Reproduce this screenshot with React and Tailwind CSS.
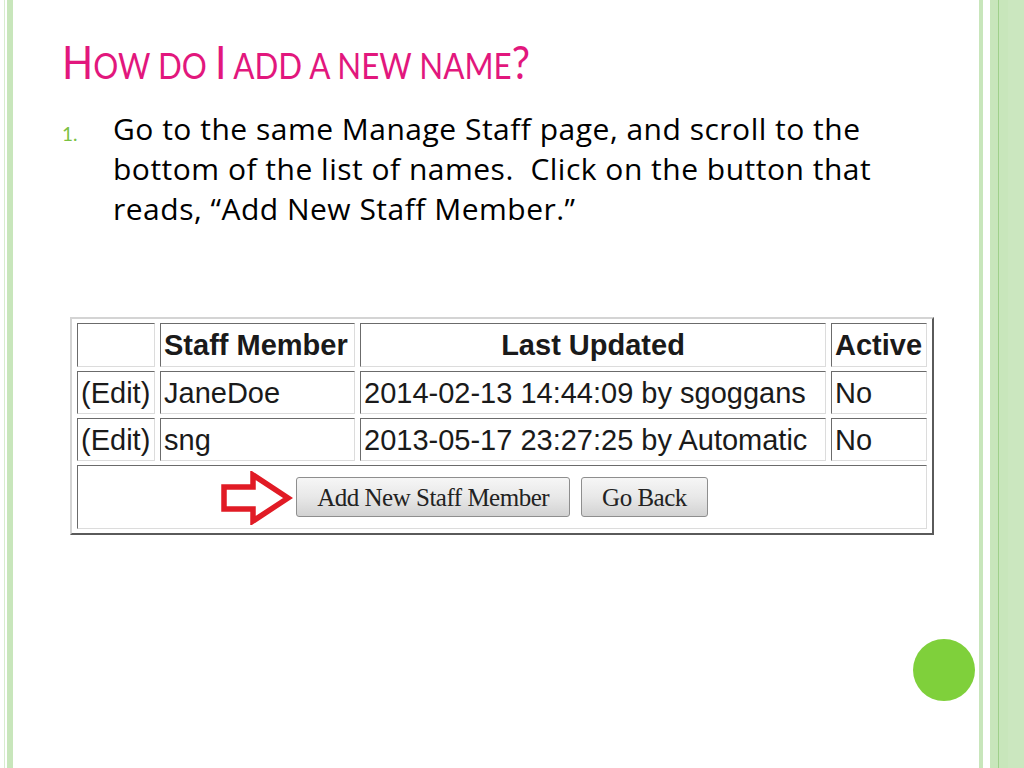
import React from 'react';

const rows = [
  { name: 'JaneDoe', updated: '2014-02-13 14:44:09 by sgoggans', active: 'No' },
  { name: 'sng', updated: '2013-05-17 23:27:25 by Automatic', active: 'No' },
];

const cell = 'border border-t-[#6b6b6b] border-l-[#6b6b6b] border-r-[#dcdcdc] border-b-[#dcdcdc] px-[3px] align-middle';

const Arrow = () => (
  <svg width="72" height="54" viewBox="0 0 72 54" className="absolute left-[-75px] top-[-6px]">
    <path
      d="M3 16 L32 16 L32 4 L67 27 L32 50 L32 38 L3 38 Z"
      fill="#ffffff"
      stroke="#e11b25"
      strokeWidth="5.5"
      strokeLinejoin="miter"
    />
  </svg>
);

const SlideButton = ({ children }) => (
  <button className="h-[40px] px-[20px] rounded-[3px] border border-[#8e8e8e] bg-gradient-to-b from-[#f6f6f6] via-[#e8e8e8] to-[#d2d2d2] text-[25px] text-[#222] font-['Liberation_Serif',serif] leading-none tracking-[-0.5px]">
    {children}
  </button>
);

export default function App() {
  return (
    <div className="flex w-[1024px] h-[768px] bg-white overflow-hidden">
      {/* left frame */}
      <div className="w-[4px]" />
      <div className="w-[1px] bg-[#d7ecce]" />
      <div className="w-[2px]" />
      <div className="w-[6px] bg-[#c8e6bb]" />

      <div className="flex-1 flex flex-col">
        <h1 className="ml-[49px] pt-[33px] origin-left scale-x-[0.87] whitespace-nowrap text-[#e2177d] text-[36px] leading-[56px] font-['Lato',sans-serif] uppercase">
          <span className="text-[47px]">H</span>ow do <span className="text-[47px]">I</span> add a new name<span className="text-[47px]">?</span>
        </h1>

        <div className="flex pl-[49px] pt-[16px]">
          <span className="w-[51px] pt-[15px] text-[19px] leading-[20px] text-[#7ac143] font-['Lato',sans-serif]">1.</span>
          <p className="w-[800px] text-[30px] leading-[40px] tracking-[0.5px] text-black font-['Open_Sans',sans-serif]">
            Go to the same Manage Staff page, and scroll to the bottom of the list of names.&nbsp; Click on the button that reads, “Add New Staff Member.”
          </p>
        </div>

        <div className="pl-[57px] pt-[88px]">
          <table className="border-separate border-spacing-x-[5px] border-spacing-y-[4px] border-2 border-t-[#d4d4d4] border-l-[#d4d4d4] border-r-[#5a5a5a] border-b-[#5a5a5a] bg-white text-[29px] leading-[34px] text-[#1a1a1a] font-['Liberation_Sans',Arial,sans-serif]">
            <thead>
              <tr className="h-[44px] font-bold">
                <th className={`${cell} w-[78px]`}></th>
                <th className={`${cell} w-[195px] text-left`}>Staff Member</th>
                <th className={`${cell} w-[466px] text-center`}>Last Updated</th>
                <th className={`${cell} w-[96px] text-left`}>Active</th>
              </tr>
            </thead>
            <tbody>
              {rows.map((row) => (
                <tr key={row.name} className="h-[43px]">
                  <td className={cell}>(Edit)</td>
                  <td className={cell}>{row.name}</td>
                  <td className={cell}>{row.updated}</td>
                  <td className={cell}>{row.active}</td>
                </tr>
              ))}
              <tr className="h-[64px]">
                <td colSpan={4} className={`${cell} text-center`}>
                  <div className="inline-flex gap-[11px] relative">
                    <Arrow />
                    <SlideButton>Add New Staff Member</SlideButton>
                    <SlideButton>Go Back</SlideButton>
                  </div>
                </td>
              </tr>
            </tbody>
          </table>
        </div>

        <div className="mt-auto mb-[67px] mr-[4px] flex justify-end">
          <div className="w-[62px] h-[62px] rounded-full bg-[#7fd03b]" />
        </div>
      </div>

      {/* right frame */}
      <div className="w-[4px] bg-[#c8e6bb]" />
      <div className="w-[7px]" />
      <div className="w-[8px] bg-[#c8e6bb]" />
      <div className="w-[1px] bg-[#9fd08a]" />
      <div className="w-[9px] bg-[#c8e6bb]" />
      <div className="w-[16px] bg-[#cbe7bf]" />
    </div>
  );
}
